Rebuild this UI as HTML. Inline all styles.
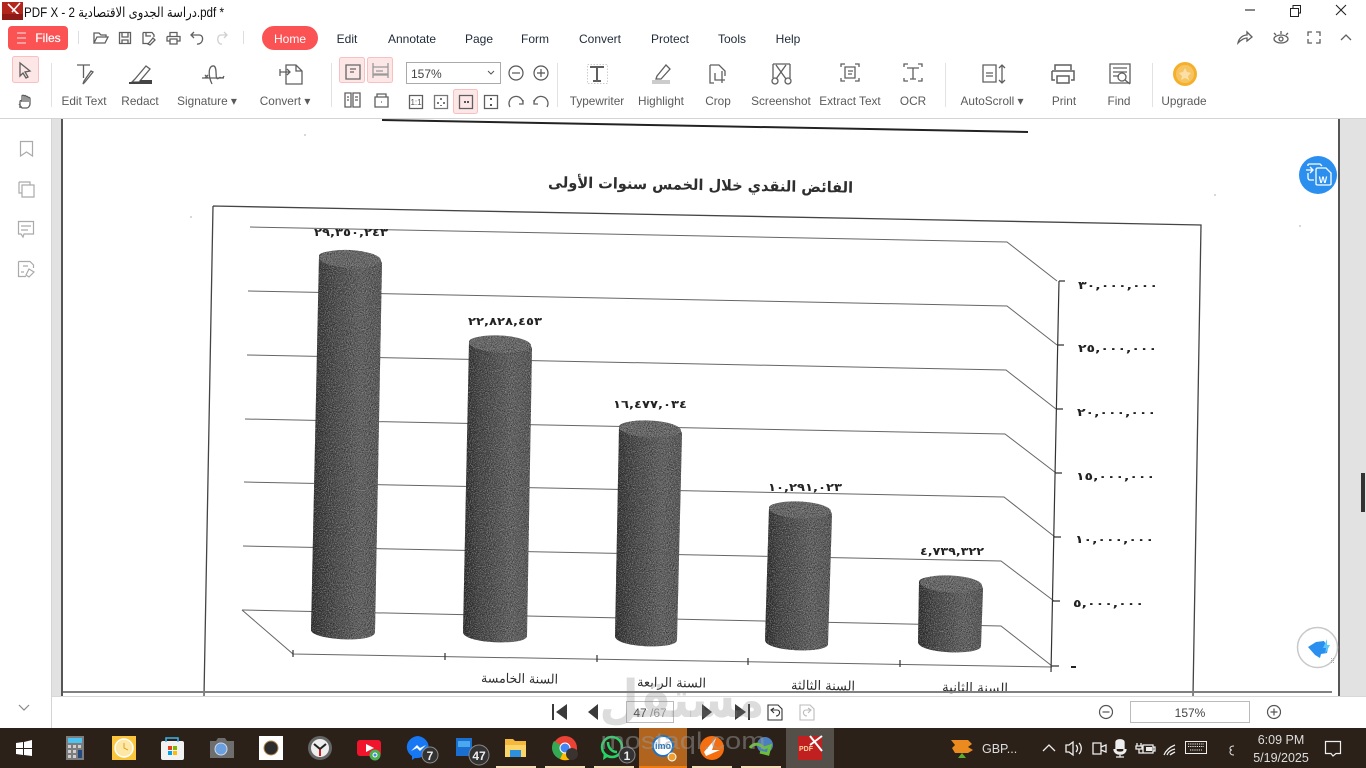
<!DOCTYPE html>
<html><head><meta charset="utf-8"><title>PDF X</title>
<style>
html,body{margin:0;padding:0;background:#fff;width:1366px;height:768px;overflow:hidden}
svg{display:block;position:absolute;left:0;top:0}
.ui{font-family:"Liberation Sans",sans-serif;font-size:11.8px;fill:#5a5a5a;text-anchor:middle}
.menu{font-family:"Liberation Sans",sans-serif;font-size:12px;fill:#1f2a38;text-anchor:middle}
.i{fill:none;stroke:#5f5f5f;stroke-width:1.3}
.s{fill:none;stroke:#aaa;stroke-width:1.2}
.ar{font-family:"DejaVu Sans",sans-serif;fill:#2e2e2e}
.num{font-family:"DejaVu Sans",sans-serif;fill:#222;font-size:11px;font-weight:bold;direction:ltr;unicode-bidi:bidi-override}
.g{fill:none;stroke:#666;stroke-width:1}
.t{fill:none;stroke:#eee;stroke-width:1.3}
.tt{font-family:"Liberation Sans",sans-serif;fill:#ddd;font-size:12.5px}
</style></head><body>
<svg width="1366" height="768" viewBox="0 0 1366 768" xmlns="http://www.w3.org/2000/svg">
<defs>
<clipPath id="pg"><rect x="62" y="119" width="1276" height="577"/></clipPath>
<linearGradient id="cy" x1="0" x2="1" y1="0" y2="0">
<stop offset="0" stop-color="#2c2c2c"/><stop offset=".22" stop-color="#444"/><stop offset=".7" stop-color="#666"/><stop offset="1" stop-color="#5a5a5a"/></linearGradient>
<filter id="nz" x="0" y="0" width="100%" height="100%" color-interpolation-filters="sRGB">
<feTurbulence type="fractalNoise" baseFrequency="1.05" numOctaves="2" seed="3" result="n"/>
<feColorMatrix in="n" type="matrix" values="0 0 0 0 .1 0 0 0 0 .1 0 0 0 0 .1 2.2 0 0 0 -.95" result="d"/>
<feComposite in="d" in2="SourceGraphic" operator="in" result="c"/>
<feColorMatrix in="n" type="matrix" values="0 0 0 0 .68 0 0 0 0 .68 0 0 0 0 .68 0 2.2 0 0 -1.05" result="l"/>
<feComposite in="l" in2="SourceGraphic" operator="in" result="e"/>
<feMerge><feMergeNode in="SourceGraphic"/><feMergeNode in="c"/><feMergeNode in="e"/></feMerge>
</filter>
</defs>

<!-- window backgrounds -->
<rect x="0" y="0" width="1366" height="768" fill="#fff"/>
<rect x="52" y="119" width="10" height="577" fill="#e2e2e2"/>
<rect x="1340" y="119" width="26" height="577" fill="#e2e2e2"/>
<rect x="1361" y="473" width="4" height="39" fill="#333"/>
<rect x="0" y="118" width="1366" height="1" fill="#d4d4d4"/>
<rect x="51" y="119" width="1" height="609" fill="#d4d4d4"/>
<rect x="52" y="696" width="1314" height="1" fill="#d8d8d8"/>

<!-- PDF page -->
<rect x="62" y="119" width="1276" height="577" fill="#fff"/>
<rect x="61" y="119" width="2" height="577" fill="#555"/>
<rect x="1338" y="119" width="2" height="577" fill="#555"/>
<g clip-path="url(#pg)">
<path d="M382 120L1028 132" stroke="#222" stroke-width="2" fill="none"/>
<text class="ar" transform="translate(700.5,190) rotate(1)" text-anchor="middle" font-size="15" font-weight="bold" direction="rtl" textLength="305" lengthAdjust="spacingAndGlyphs">الفائض النقدي خلال الخمس سنوات الأولى</text>
<path d="M213 206L1201 225L1193 696M213 206L204 696" fill="none" stroke="#444" stroke-width="1.3"/>
<g class="g">
<path d="M250 227L1007 242L1057 281"/><path d="M248 291L1007 306L1057 345"/>
<path d="M247 355L1006 370L1056 409"/><path d="M245 419L1005 434L1056 473"/>
<path d="M244 482L1004 497L1055 537"/><path d="M243 546L1001 561L1054 601"/>
<path d="M242 610L1001 626L1052 666"/><path d="M242 610L293 654L1052 667"/>
</g>
<path d="M1059 281L1051 672M1059 281H1065M1057 345H1064M1056 409H1063M1055 473H1062M1054 537H1061M1053 601H1060M1052 666H1059M293 650V657M445 653V660M597 655V662M748 658V665M900 660V667" fill="none" stroke="#333" stroke-width="1.2"/>
<!-- cylinders -->
<g filter="url(#nz)">
<path d="M319 256C319 247 382 250 382 264L375 632C375 644 311 640 311 630Z" fill="url(#cy)"/>
<path d="M469 342C469 332 532 335 532 349L527 636C527 646 463 644 463 632Z" fill="url(#cy)"/>
<path d="M619 427C619 417 682 420 682 434L677 640C677 650 615 648 615 636Z" fill="url(#cy)"/>
<path d="M769 508C769 498 832 501 832 515L828 644C828 654 765 652 765 640Z" fill="url(#cy)"/>
<path d="M919 582C919 572 983 575 983 589L981 646C981 656 918 654 918 642Z" fill="url(#cy)"/>
<g fill="#6e6e6e"><ellipse cx="350" cy="259" rx="31" ry="9" transform="rotate(3 350 259)"/><ellipse cx="500" cy="344" rx="31" ry="8.500" transform="rotate(3 500 344)"/><ellipse cx="650" cy="429" rx="31" ry="8.500" transform="rotate(3 650 429)"/><ellipse cx="800" cy="510" rx="31" ry="8.500" transform="rotate(3 800 510)"/><ellipse cx="951" cy="584" rx="31" ry="8.500" transform="rotate(3 951 584)"/></g>
</g>
<!-- values -->
<g class="num">
<text x="314" y="236" textLength="74" lengthAdjust="spacingAndGlyphs">٢٩,٣٥٠,٢٤٣</text>
<text x="468" y="325" textLength="74" lengthAdjust="spacingAndGlyphs">٢٢,٨٢٨,٤٥٣</text>
<text x="613" y="408" textLength="74" lengthAdjust="spacingAndGlyphs">١٦,٤٧٧,٠٣٤</text>
<text x="768" y="491" textLength="74" lengthAdjust="spacingAndGlyphs">١٠,٢٩١,٠٢٣</text>
<text x="920" y="555" textLength="64" lengthAdjust="spacingAndGlyphs">٤,٧٣٩,٣٢٢</text>
<text x="1078" y="289" textLength="80" lengthAdjust="spacingAndGlyphs">٣٠,٠٠٠,٠٠٠</text>
<text x="1078" y="352" textLength="79" lengthAdjust="spacingAndGlyphs">٢٥,٠٠٠,٠٠٠</text>
<text x="1077" y="416" textLength="79" lengthAdjust="spacingAndGlyphs">٢٠,٠٠٠,٠٠٠</text>
<text x="1076" y="480" textLength="79" lengthAdjust="spacingAndGlyphs">١٥,٠٠٠,٠٠٠</text>
<text x="1075" y="543" textLength="79" lengthAdjust="spacingAndGlyphs">١٠,٠٠٠,٠٠٠</text>
<text x="1073" y="607" textLength="71" lengthAdjust="spacingAndGlyphs">٥,٠٠٠,٠٠٠</text>
</g>
<rect x="1071" y="666" width="5" height="2" fill="#222"/>
<g class="ar" font-size="13" text-anchor="middle" direction="rtl">
<text transform="translate(519.500,683) rotate(1)" textLength="77" lengthAdjust="spacingAndGlyphs">السنة الخامسة</text>
<text transform="translate(671.500,687) rotate(1)" textLength="69" lengthAdjust="spacingAndGlyphs">السنة الرابعة</text>
<text transform="translate(823,690) rotate(1)" textLength="64" lengthAdjust="spacingAndGlyphs">السنة الثالثة</text>
<text transform="translate(975,692) rotate(1)" textLength="66" lengthAdjust="spacingAndGlyphs">السنة الثانية</text>
</g>
<rect x="63" y="691" width="1269" height="2" fill="#808080"/>
<g fill="#ccc"><circle cx="1215" cy="195" r="1"/><circle cx="1300" cy="226" r="1"/><circle cx="305" cy="135" r="1"/><circle cx="191" cy="217" r="1"/></g>
</g>

<!-- floating buttons -->
<circle cx="1318" cy="175" r="19" fill="#2b8ff0"/>
<g fill="none" stroke="#fff" stroke-width="1.300"><path d="M1306 170H1313M1310 167L1313 170L1310 173M1308 166V164C1308 165 1308 164 1309 164H1320L1322 166M1308 173V178C1308 179 1309 180 1310 180H1314"/><path d="M1317 168H1326L1331 173V184C1331 185 1330 185 1329 185H1318C1317 185 1316 185 1316 184V169Z" fill="#2b8ff0"/></g>
<text x="1323" y="183" font-family="Liberation Sans,sans-serif" font-size="9" font-weight="bold" fill="#fff" text-anchor="middle">W</text>
<circle cx="1317.500" cy="647.500" r="20" fill="#fff" stroke="#c9c9c9" stroke-width="1.500"/>
<path d="M1308 647L1316 642L1324 641L1328 648L1327 653L1321 654L1320 658L1315 655Z" fill="#2b8ff0"/>
<path d="M1327 639L1323 648H1326L1325 654L1330 645H1327Z" fill="#58c8ff"/>
<g fill="#aaa"><rect x="1331" y="658" width="1" height="1"/><rect x="1333" y="658" width="1" height="1"/><rect x="1331" y="660" width="1" height="1"/><rect x="1333" y="660" width="1" height="1"/><rect x="1331" y="662" width="1" height="1"/><rect x="1333" y="662" width="1" height="1"/></g>

<!-- title bar -->
<rect x="2" y="2" width="21" height="18" fill="#b3261e"/>
<path d="M8 4L19 15M20 3L12 12" stroke="#fff" stroke-width="1.600" fill="none"/>
<rect x="2" y="14" width="21" height="6" fill="#8e1b16"/>
<text x="24" y="17" font-family="Liberation Sans,'DejaVu Sans',sans-serif" font-size="13.500" fill="#111" textLength="200" lengthAdjust="spacingAndGlyphs" direction="ltr">PDF X - 2 دراسة الجدوى الاقتصادية.pdf *</text>
<path d="M1245 10H1255" stroke="#111"/>
<rect x="1290.500" y="8.500" width="8" height="8" fill="#fff" stroke="#222"/><path d="M1293 8V5.500H1300.500V13H1298.500" fill="none" stroke="#222"/>
<path d="M1336 5L1346 15M1346 5L1336 15" stroke="#222" stroke-width="1.100"/>

<!-- menu row -->
<rect x="8" y="26" width="60" height="24" rx="4" fill="#fb5254"/>
<path d="M17 33H26M17 38H26M17 43H26" stroke="#fff" stroke-opacity=".85"/>
<text x="48" y="42" font-family="Liberation Sans,sans-serif" font-size="12" fill="#fff" text-anchor="middle" stroke="#fff" stroke-width=".2">Files</text>
<path d="M78.500 31V44M243.500 31V44" stroke="#ddd"/>
<g class="i">
<path d="M94 43V33H99L101 35H106V37M94 43L97 37H108L105 43Z"/>
<path d="M119.500 32.500H130.500V43.500H119.500ZM122 32.500V37H128V32.500M122 43.500V40H128V43.500"/>
<path d="M143 32.500H152L154 35V37M143 32.500V43.500H148M146 33V36H151M153 38L148 44L150 45L155 40Z"/>
<path d="M170 36V32.500H177V36M167 36.500H180V41H177M170 41H167V36.500M170 39H177V44H170Z"/>
<path d="M192 35H199C205 35 203 45 197 44M194 32L191 35L194 38"/>
</g>
<path d="M226 35H221C216 35 217 45 222 44M224 32L227 35L224 38" fill="none" stroke="#d0d0d0" stroke-width="1.300"/>
<rect x="262" y="26" width="56" height="24" rx="12" fill="#fb5254"/>
<text x="290" y="43" font-family="Liberation Sans,sans-serif" font-size="12" fill="#fff" text-anchor="middle">Home</text>
<g class="menu">
<text x="347" y="43">Edit</text><text x="412" y="43">Annotate</text><text x="479" y="43">Page</text><text x="535" y="43">Form</text><text x="600" y="43">Convert</text><text x="670" y="43">Protect</text><text x="732" y="43">Tools</text><text x="788" y="43">Help</text>
</g>
<g class="i">
<path d="M1238 43C1239 38 1243 35 1247 35V32L1252 37L1247 41V38C1244 38 1241 40 1238 43Z"/>
<ellipse cx="1281" cy="39" rx="7" ry="4"/><circle cx="1281" cy="39" r="2"/><path d="M1281 31V34M1274 33L1276 35M1288 33L1286 35"/>
<path d="M1308 36V32H1312M1316 32H1320V36M1308 39V43H1312M1320 39V43H1316"/>
<path d="M1341 40L1346 35L1351 40"/>
</g>

<!-- tool highlights -->
<g fill="#fde6e6" stroke="#f8c0c0"><rect x="12.500" y="56.500" width="26" height="26" rx="2"/><rect x="339.500" y="57.500" width="25" height="25" rx="2"/><rect x="367.500" y="57.500" width="25" height="25" rx="2"/><rect x="453.500" y="89.500" width="24" height="24" rx="2"/></g>
<path d="M51.500 63V107M331.500 63V107M557.500 63V107M945.500 63V107M1152.500 63V107" stroke="#e2e2e2"/>

<!-- tool icons -->
<g class="i">
<path d="M20 63L20 76L23 73L26 78L28 77L25 72L30 71Z"/>
<path d="M20 108V102C20 100 22 100 22 102M22 101V96C22 95 24 95 24 96V102M24 97C24 95 26 95 26 97V102M26 97C26 96 28 96 28 98V102M28 98C28 97 30 97 30 99V104C30 106 28 108 27 108H22L19 104"/>
<path d="M77 65H90M83.500 65V78M93 72L85 82L83 84L84 81L91 71Z"/>
<path d="M135 79L146 66L150 69L139 82H132Z"/>
<path d="M202 78H224M205 75L208 78M208 75L205 78M212 84C208 76 208 65 214 66C218 68 214 82 219 78C220 76 222 80 224 76"/>
<path d="M286 65H296L302 71V84H286ZM296 65V71H302M280 72H290M287 69L290 72L287 75M280 69V76"/>
<path d="M346 65H360V79H346ZM350 69H356M350 72H354" stroke="#666"/>
<path d="M373 63V67H388V63M373 78V74H388V78M373 67V75H388V67M376 71H383" stroke="#999"/>
<path d="M345 93H351V107H345ZM353 93H360V107H353ZM347 97H349M355 97H358M347 100H349M355 100H358"/>
<path d="M375 97H388V107H375ZM377 97V94H386V97M381 102H382"/>
<path d="M409.500 95.500H422.500V108.500H409.500Z"/><path d="M434.500 95.500H447.500V108.500H434.500Z" stroke="#777"/><path d="M459.500 95.500H472.500V108.500H459.500Z"/><path d="M484.500 95.500H497.500V108.500H484.500Z"/>
<path d="M510 107A7 7 0 1 1 523 104M523 100V104H519"/>
<path d="M547 107A7 7 0 1 0 534 104M534 100V104H538"/>
<path d="M587.500 64.500H607.500V83.500H587.500Z" stroke="#ccc" stroke-dasharray="1.500 1.500" stroke-width="1"/>
<path d="M590 67H604M597 67V81M593 81H601" stroke-width="2"/>
<path d="M657 76L666 65L670 69L661 79H656Z"/>
<path d="M710 65H719L725 71V76M710 65V83H714M715 73V80H725M722 71V83"/>
<path d="M773 64H790M773 64V78M790 64V78M776 65L786 79M786 65L776 79"/><circle cx="775" cy="81" r="3"/><circle cx="788" cy="81" r="3"/>
<path d="M841 67V64H845M855 64H859V67M841 78V81H845M855 81H859V78M845 67H855V78H845ZM848 71H853M848 74H852"/>
<path d="M904 67V64H908M918 64H922V67M904 78V81H908M918 81H922V78M907 68H919M913 68V79M910 79H916" />
<path d="M983 65H996V82H983ZM986 73H993M986 76H993M1002 65V83M999 68L1002 65L1005 68M999 80L1002 83L1005 80"/>
<path d="M1055 70V65H1071V70M1052 71H1074V80H1071M1055 80H1052V71M1057 76H1069V83H1057Z" stroke-width="1.500"/>
<path d="M1110 64H1130V83H1110ZM1113 68H1127M1113 72H1127M1113 76H1119" />
</g>
<rect x="129" y="82" width="23" height="2" fill="#444"/><rect x="140" y="80" width="12" height="2" fill="#444"/>
<rect x="652" y="80" width="18" height="4" fill="#ccc"/>
<circle cx="1122" cy="77" r="4" class="i" fill="#fff"/><path d="M1125 80L1130 84" class="i"/>
<text x="416" y="105" font-family="Liberation Sans,sans-serif" font-size="8" fill="#555" text-anchor="middle">1:1</text>
<g fill="#555"><rect x="464" y="101" width="2" height="2"/><rect x="467" y="101" width="2" height="2"/><rect x="490" y="98" width="2" height="2"/><rect x="490" y="104" width="2" height="2"/><rect x="440" y="98" width="2" height="2" fill="#777"/><rect x="437" y="102" width="2" height="2" fill="#777"/><rect x="443" y="102" width="2" height="2" fill="#777"/><rect x="440" y="105" width="2" height="1" fill="#777"/></g>
<rect x="406.500" y="62.500" width="94" height="21" fill="#fff" stroke="#aaa"/>
<text x="411" y="78" font-family="Liberation Sans,sans-serif" font-size="12" fill="#444">157%</text>
<path d="M488 71L491 74L494 71" fill="none" stroke="#555"/>
<g fill="none" stroke="#555" stroke-width="1.200"><circle cx="516" cy="73" r="7"/><path d="M512 73H520"/><circle cx="541" cy="73" r="7"/><path d="M537 73H545M541 69V77"/></g>
<circle cx="1185" cy="74" r="12" fill="#f4b02a"/><circle cx="1185" cy="74" r="9" fill="#f7c463"/><path d="M1185 68L1187 72L1191 73L1188 76L1189 80L1185 78L1181 80L1182 76L1179 73L1183 72Z" fill="#fbe0a5"/>

<!-- tool labels -->
<g class="ui">
<text x="84" y="105">Edit Text</text><text x="140" y="105">Redact</text><text x="207" y="105">Signature ▾</text><text x="285" y="105">Convert ▾</text>
<text x="597" y="105">Typewriter</text><text x="661" y="105">Highlight</text><text x="718" y="105">Crop</text><text x="781" y="105">Screenshot</text><text x="850" y="105">Extract Text</text><text x="913" y="105">OCR</text><text x="992" y="105">AutoScroll ▾</text><text x="1064" y="105">Print</text><text x="1119" y="105">Find</text><text x="1184" y="105">Upgrade</text>
</g>

<!-- sidebar -->
<g class="s">
<path d="M20.500 141.500H32.500V156L26.500 152L20.500 156Z"/>
<path d="M19 182H30V185M22 185H34V197H22Z M19 182V193H22"/>
<path d="M18.500 221.500H33.500V234H24L23 237L21 234H18.500ZM21 226H31M21 230H28"/>
<path d="M18.500 261.500H30L33.500 265V268M18.500 261.500V276.500H26M23 266H28M21 272H24M29 269L34 272L29 277L26 275Z"/>
</g>
<path d="M19 705L24 710L29 705" fill="none" stroke="#888" stroke-width="1.200"/>

<!-- bottom nav -->
<g fill="#3a3a3a">
<path d="M567 704V720L556 712Z"/><path d="M598 704V720L588 712Z"/><path d="M702 704V720L712 712Z"/><path d="M735 704V720L746 712Z"/>
</g>
<rect x="552" y="704" width="2" height="16" fill="#3a3a3a"/><rect x="748" y="704" width="2" height="16" fill="#3a3a3a"/>
<rect x="626.500" y="701.500" width="47" height="21" fill="none" stroke="#bbb"/>
<text x="650" y="717" font-family="Liberation Sans,sans-serif" font-size="12" fill="#444" text-anchor="middle">47 <tspan fill="#999">/67</tspan></text>
<g fill="none" stroke="#333" stroke-width="1.100"><path d="M768 705H778L782 709V720H768ZM772 710H777C781 710 780 716 776 716M774 708L771 710L774 713"/></g>
<g fill="none" stroke="#bbb" stroke-width="1.100"><path d="M800 705H810L814 709V720H800ZM810 710H806C802 710 803 716 807 716M808 708L811 710L808 713"/></g>
<g fill="none" stroke="#555" stroke-width="1.200"><circle cx="1106" cy="712" r="6.500"/><path d="M1102.500 712H1109.500"/><circle cx="1274" cy="712" r="6.500"/><path d="M1270.500 712H1277.500M1274 708.500V715.500"/></g>
<rect x="1130.500" y="701.500" width="119" height="21" fill="#fff" stroke="#bbb"/>
<text x="1190" y="717" font-family="Liberation Sans,sans-serif" font-size="12" fill="#444" text-anchor="middle">157%</text>

<!-- taskbar -->
<rect x="0" y="728" width="1366" height="40" fill="#2b2119"/>
<rect x="639" y="728" width="48" height="40" fill="#b0641e"/>
<rect x="786" y="728" width="48" height="40" fill="#544f49"/>
<g fill="#f5dcb8"><rect x="496" y="766" width="40" height="2"/><rect x="545" y="766" width="40" height="2"/><rect x="594" y="766" width="40" height="2"/><rect x="692" y="766" width="40" height="2"/><rect x="741" y="766" width="40" height="2"/></g>
<rect x="639" y="766" width="48" height="2" fill="#f07d10"/>
<path d="M16 743L23 742V748H16ZM24 742L32 740V748H24ZM16 749H23V755L16 754ZM24 749H32V756L24 755Z" fill="#fff"/>
<!-- calculator -->
<rect x="66" y="736" width="18" height="24" fill="#7d7d7d"/><rect x="68" y="738" width="14" height="5" fill="#4dc3f0"/><rect x="78" y="750" width="4" height="8" fill="#234a80"/>
<g fill="#cfcfcf"><rect x="68" y="745" width="3" height="3"/><rect x="73" y="745" width="3" height="3"/><rect x="78" y="745" width="3" height="3"/><rect x="68" y="750" width="3" height="3"/><rect x="73" y="750" width="3" height="3"/><rect x="68" y="755" width="3" height="3"/><rect x="73" y="755" width="3" height="3"/></g>
<!-- clock app -->
<rect x="112" y="736" width="24" height="24" fill="#fcc63c"/><circle cx="124" cy="748" r="9" fill="#fde8a8" stroke="#fff" stroke-width="1.500"/><path d="M124 743V748L128 750" stroke="#e0a020" fill="none"/>
<!-- store -->
<rect x="161" y="741" width="23" height="19" rx="2" fill="#f2f2f2"/><path d="M166 742V738H178V742" fill="none" stroke="#39b6f0" stroke-width="1.500"/><rect x="168" y="746" width="4" height="4" fill="#e8401c"/><rect x="173" y="746" width="4" height="4" fill="#7cbb00"/><rect x="168" y="751" width="4" height="4" fill="#00a1f1"/><rect x="173" y="751" width="4" height="4" fill="#ffbb00"/>
<!-- camera -->
<path d="M210 741H216L218 738H225L227 741H234V758H210Z" fill="#6e6e6e"/><circle cx="221" cy="749" r="6" fill="#6a9fe0" stroke="#cfd8e8"/>
<!-- app -->
<rect x="259" y="736" width="24" height="24" fill="#fff"/><circle cx="271" cy="748" r="7" fill="#2c2c2c" stroke="#b98a50"/>
<!-- clock -->
<circle cx="320" cy="748" r="12" fill="#666"/><circle cx="320" cy="748" r="9" fill="#eee"/><path d="M320 749V756" stroke="#d02020" stroke-width="2"/><path d="M320 749L314 744M320 749L326 744" stroke="#222" stroke-width="2"/>
<!-- youtube chrome -->
<rect x="357" y="740" width="24" height="16" rx="3" fill="#f0142c"/><path d="M366 744L374 748L366 752Z" fill="#fff"/><circle cx="375" cy="755" r="5.500" fill="#4caf50"/><circle cx="375" cy="755" r="2" fill="#4285f4" stroke="#fff"/>
<!-- messenger -->
<path d="M418 736A12 11 0 1 1 415 758L412 760V756A12 11 0 0 1 418 736Z" fill="#1877f2"/><path d="M411 751L417 745L420 748L426 745L420 751L417 748Z" fill="#fff"/>
<circle cx="430" cy="755" r="8" fill="#333" stroke="#888"/><text x="430" y="760" font-family="Liberation Sans,sans-serif" font-size="12" font-weight="bold" fill="#eee" text-anchor="middle">7</text>
<!-- blue app -->
<rect x="456" y="738" width="16" height="18" fill="#1a6fd0"/><rect x="458" y="741" width="12" height="6" fill="#4aa8ee"/>
<circle cx="479" cy="755" r="10" fill="#333" stroke="#888"/><text x="479" y="760" font-family="Liberation Sans,sans-serif" font-size="12" font-weight="bold" fill="#eee" text-anchor="middle">47</text>
<!-- folder -->
<path d="M505 739H513L515 741H526V757H505Z" fill="#f5b73c"/><rect x="505" y="745" width="21" height="12" fill="#fbd568"/><rect x="510" y="750" width="11" height="7" fill="#2d8fe0"/>
<!-- chrome -->
<circle cx="565" cy="748" r="12" fill="#ea4335"/><path d="M565 748L576 754A12 12 0 0 1 560 759Z" fill="#fbbc05"/><path d="M565 748L560 759A12 12 0 0 1 554 741Z" fill="#34a853"/><circle cx="565" cy="748" r="5" fill="#4285f4" stroke="#fff"/><circle cx="572" cy="754" r="6" fill="#3a3330"/>
<!-- whatsapp -->
<circle cx="612" cy="747" r="10" fill="none" stroke="#25d366" stroke-width="2.500"/><path d="M603 760L604 752L609 756Z" fill="#25d366"/><path d="M608 742C608 748 612 752 617 752" stroke="#25d366" stroke-width="2.500" fill="none"/>
<circle cx="627" cy="755" r="8" fill="#333" stroke="#888"/><text x="627" y="760" font-family="Liberation Sans,sans-serif" font-size="12" font-weight="bold" fill="#eee" text-anchor="middle">1</text>
<!-- imo -->
<circle cx="663" cy="746" r="10" fill="#fff" stroke="#1c74c4" stroke-width="2"/><text x="663" y="749" font-family="Liberation Sans,sans-serif" font-size="9" font-weight="bold" fill="#1c74c4" text-anchor="middle">imo</text><circle cx="672" cy="757" r="4" fill="#f0a030" stroke="#fff"/>
<!-- orange -->
<circle cx="712" cy="748" r="12" fill="#f56e0f"/><path d="M704 752L716 738L712 750L720 750L706 756Z" fill="#fff"/>
<!-- idm -->
<circle cx="765" cy="745" r="8" fill="#4d7fc0"/><path d="M750 748C754 742 760 744 764 748L770 746L768 754L760 752" fill="none" stroke="#6cbf3a" stroke-width="3"/>
<!-- pdfx -->
<rect x="798" y="736" width="24" height="24" fill="#c02020"/><path d="M810 745L822 736M810 736L822 751" stroke="#fff" stroke-width="2"/><text x="806" y="751" font-family="Liberation Sans,sans-serif" font-size="7" font-weight="bold" fill="#ffd0a0" text-anchor="middle">PDF</text>
<!-- tray -->
<path d="M951 740H968L972 744L968 747L973 750L968 753H955L952 748L955 745Z" fill="#ea8a1f"/><path d="M958 758L962 753L966 758Z" fill="#5cad28"/>
<text class="tt" x="982" y="753" font-size="13">GBP...</text>
<g class="t">
<path d="M1043 751L1049 745L1055 751"/>
<path d="M1066 745H1069L1073 742V755L1069 752H1066ZM1076 745C1078 747 1078 750 1076 752M1079 743C1082 746 1082 751 1079 754"/>
<path d="M1093 743H1101V754H1093ZM1101 747L1106 745V752L1101 750"/>
<path d="M1116 742C1116 739 1124 739 1124 742V750C1124 753 1116 753 1116 750ZM1114 749C1114 756 1126 756 1126 749M1120 755V757M1116 757H1124" fill="#eee"/>
<path d="M1143 745H1153V753H1143ZM1153 747H1155V751H1153ZM1137 743V746M1141 743V746M1136 746H1142V749H1136ZM1139 749V753H1143" fill="none"/>
<path d="M1164 755C1166 750 1170 747 1175 745M1167 755C1168 752 1171 750 1175 749M1170 755C1171 754 1173 753 1175 752"/>
</g>
<rect x="1146" y="747" width="6" height="4" fill="#eee"/>
<rect x="1185.500" y="741.500" width="21" height="12" fill="none" stroke="#eee" stroke-width="1"/>
<path d="M1188 744H1204M1188 746.500H1204M1190 750H1202" stroke="#eee" stroke-width="1" stroke-dasharray="1.200 1"/>
<path d="M1234 746C1229 746 1229 750 1232 750C1229 750 1229 755 1234 755" fill="none" stroke="#ddd"/>
<text class="tt" x="1281" y="744" text-anchor="middle">6:09 PM</text>
<text class="tt" x="1281" y="762" text-anchor="middle">5/19/2025</text>
<path d="M1325.500 741.500H1340.500V753.500H1336L1333 756L1331 753.500H1325.500Z" fill="none" stroke="#eee" stroke-width="1.200"/>

<!-- watermark -->
<text x="682" y="717" font-family="DejaVu Sans,sans-serif" font-size="52" font-weight="bold" fill="#808080" fill-opacity=".28" text-anchor="middle" direction="rtl" textLength="165" lengthAdjust="spacingAndGlyphs">مستقل</text>
<text x="683" y="749" font-family="Liberation Sans,sans-serif" font-size="24" fill="#9a9a9a" fill-opacity=".5" text-anchor="middle" textLength="165" lengthAdjust="spacingAndGlyphs">mostaql.com</text>
</svg>
</body></html>
